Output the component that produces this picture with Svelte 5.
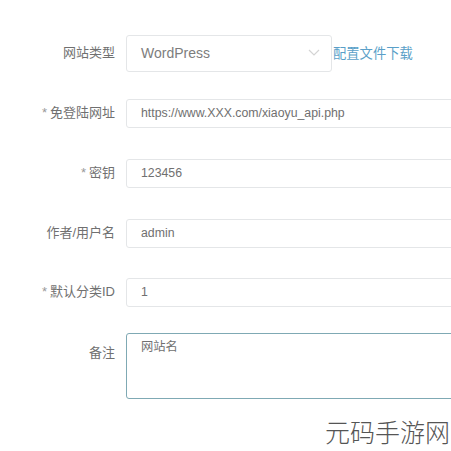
<script>
    const rows = [
        { label: "免登陆网址", value: "https://www.XXX.com/xiaoyu_api.php", required: true, gap: 27 },
        { label: "密钥", value: "123456", required: true, gap: 31 },
        { label: "作者/用户名", value: "admin", gap: 31 },
        { label: "默认分类ID", value: "1", required: true, gap: 30 },
    ];
</script>

<div class="page">
    <form class="form">
        <div class="row first">
            <span class="label">网站类型</span>
            <div class="control select">
                <span>WordPress</span>
                <svg width="12" height="7" viewBox="0 0 12 7" fill="none" stroke="#d4d4d4" stroke-width="1.2">
                    <path d="M1 1l5 5 5-5" />
                </svg>
            </div>
            <a class="link" href="#top">配置文件下载</a>
        </div>

        {#each rows as row}
            <div class="row" style="margin-top: {row.gap}px">
                <span class="label">
                    {#if row.required}<i class="star">*</i>{/if}{row.label}
                </span>
                <div class="control input">{row.value}</div>
            </div>
        {/each}

        <div class="row notes">
            <span class="label">备注</span>
            <div class="control textarea">网站名</div>
        </div>
    </form>

    <div class="watermark">元码手游网</div>
</div>

<style>
    :global(body) {
        margin: 0;
        background: #fff;
    }

    .page {
        position: relative;
        width: 451px;
        height: 451px;
        overflow: hidden;
        background: #fff;
        color: #707070;
        font-family: "Liberation Sans", "Noto Sans CJK SC", sans-serif;
        font-size: 13px;
    }

    .form {
        padding-top: 35px;
        width: 560px;
    }

    .row {
        display: flex;
        align-items: center;
    }

    .label {
        flex: none;
        width: 115px;
        margin-right: 11px;
        padding-bottom: 4px;
        text-align: right;
        white-space: nowrap;
    }

    .star {
        margin-right: 3px;
        font-style: normal;
        color: #999;
    }

    .control {
        box-sizing: border-box;
        flex: none;
        width: 400px;
        height: 29px;
        padding: 0 0 2px 14px;
        display: flex;
        align-items: center;
        background: #fff;
        border: 1px solid #e4e6e8;
        border-radius: 3px;
        color: #707070;
    }

    .select {
        width: 206px;
        height: 37px;
        padding-right: 11px;
        justify-content: space-between;
        font-size: 14px;
        color: #7d7d7d;
    }

    .input {
        font-size: 12.3px;
    }

    .link {
        margin-left: 1px;
        padding-bottom: 2px;
        font-size: 13.3px;
        color: #5a9fc8;
        text-decoration: none;
    }

    .notes {
        align-items: flex-start;
        margin-top: 26px;
    }

    .notes .label {
        padding-top: 9px;
    }

    .textarea {
        height: 66px;
        padding-top: 3px;
        align-items: flex-start;
        font-size: 12.3px;
        border-color: #7fa9b4;
    }

    .watermark {
        position: absolute;
        left: 325px;
        top: 416px;
        font-family: "Noto Sans CJK SC", sans-serif;
        font-size: 25px;
        line-height: 30px;
        font-weight: 300;
        color: #555;
        white-space: nowrap;
    }
</style>
